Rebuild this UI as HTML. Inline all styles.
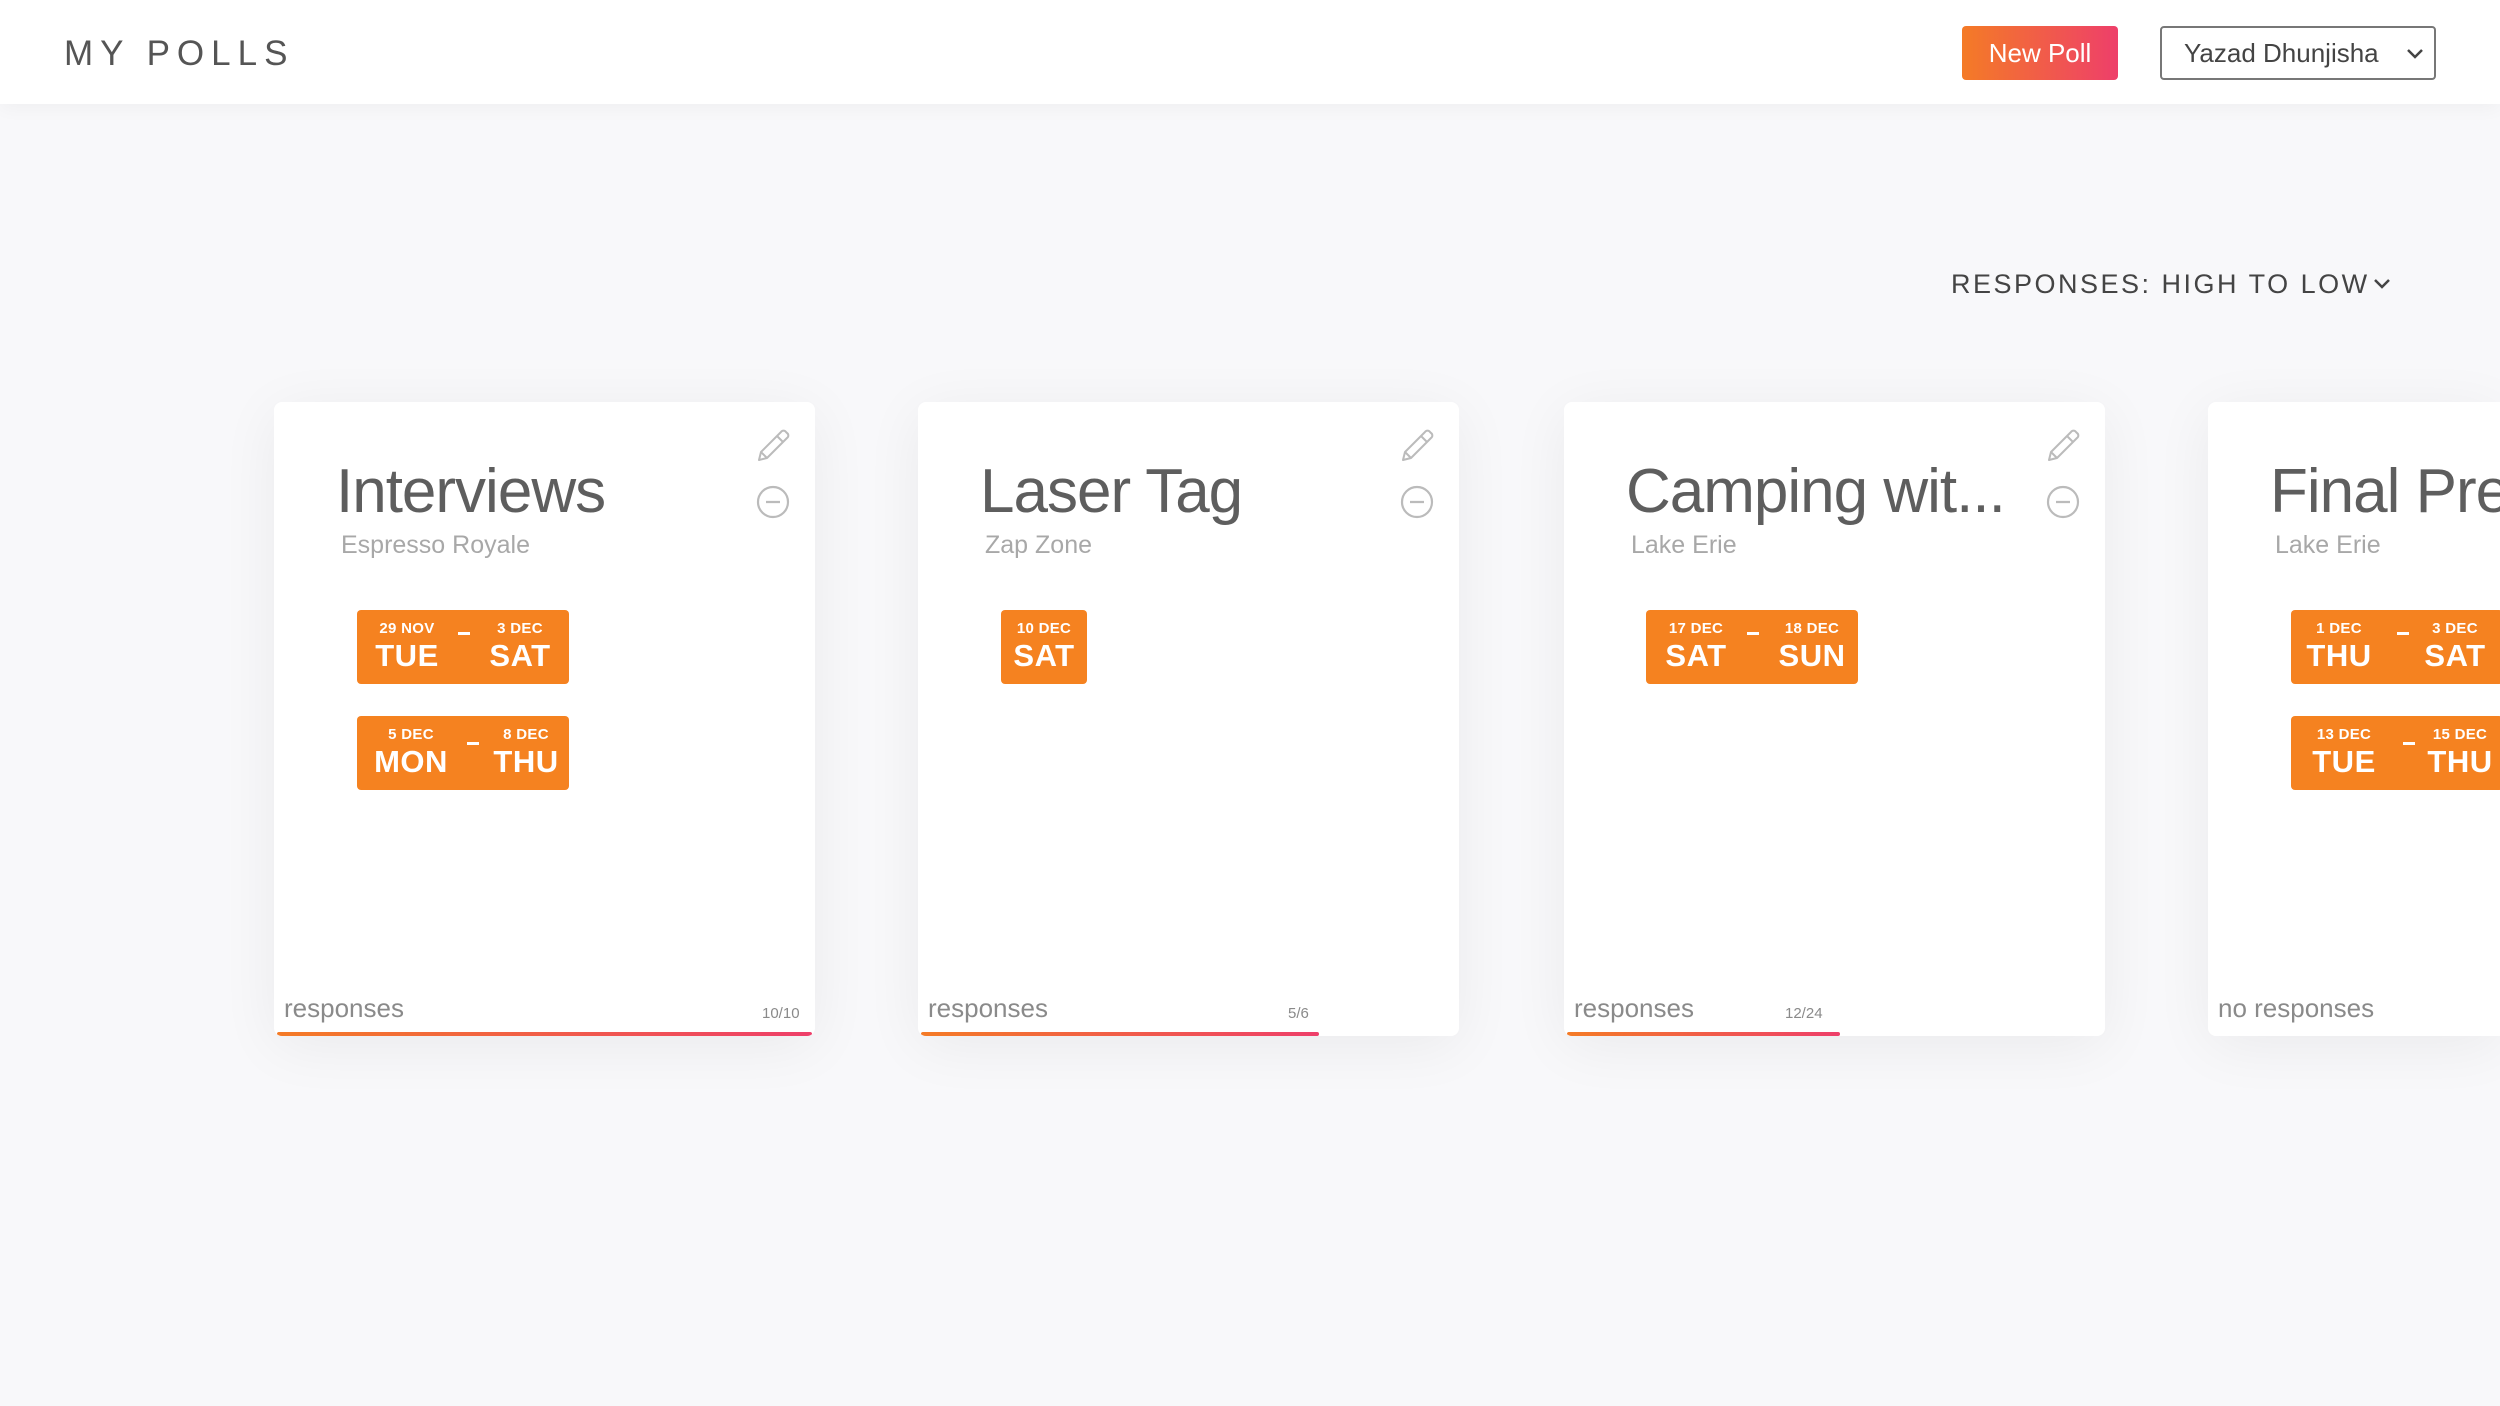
<!DOCTYPE html>
<html><head><meta charset="utf-8"><style>
*{margin:0;padding:0;box-sizing:border-box}
html,body{overflow:hidden}
body{width:2500px;height:1406px;background:#f8f8fa;font-family:"Liberation Sans",sans-serif;position:relative}
.hdr{position:absolute;left:0;top:0;width:2500px;height:104px;background:#fff;box-shadow:0 4px 18px rgba(0,0,0,0.04)}
.logo{position:absolute;left:64px;top:34px;font-size:35px;letter-spacing:7px;color:#555;line-height:40px}
.np{position:absolute;left:1962px;top:26px;width:156px;height:54px;border-radius:4px;background:linear-gradient(90deg,#f47b26,#ee3f6a);color:#fff;font-size:26px;line-height:54px;text-align:center}
.dd{position:absolute;left:2160px;top:26px;width:276px;height:54px;border:2px solid #777;border-radius:4px;color:#444;font-size:26px;line-height:50px;padding-left:22px}
.dd svg,.sort svg{position:absolute}
.sort{position:absolute;left:1951px;top:268px;font-size:27px;letter-spacing:2.5px;color:#444;line-height:32px;width:460px}
.card{position:absolute;top:402px;width:541px;height:634px;background:#fff;border-radius:8px;box-shadow:0 10px 60px rgba(0,0,0,0.06);overflow:hidden}
.t{position:absolute;left:62px;top:52px;font-size:62px;color:#5e5e5e;line-height:76px;white-space:nowrap;letter-spacing:-1px}
.s{position:absolute;left:67px;top:128px;font-size:25px;color:#a8a8a8;line-height:30px}
.pen{position:absolute;left:481px;top:26px}
.min{position:absolute;left:481px;top:82px}
.b{position:absolute;left:83px;width:212px;height:74px;background:#f58220;border-radius:4px;color:#fff}
.b .c{position:absolute;top:10px;width:100px;text-align:center}
.b .sm{font-size:15px;font-weight:bold;line-height:18px;letter-spacing:0.3px}
.b .bg{font-size:31px;font-weight:bold;line-height:36px;letter-spacing:0.5px}
.b .d{position:absolute;left:101px;top:22px;width:12px;height:3px;background:#fff}
.r{position:absolute;left:10px;top:590px;font-size:26px;color:#8a8a8a;line-height:32px}
.n{position:absolute;top:603px;font-size:15px;color:#8a8a8a;line-height:18px}
.bar{position:absolute;left:3px;bottom:0;height:4px;background:linear-gradient(90deg,#f47b26,#ee3f6a);border-radius:2px}
</style></head><body>
<div class="hdr">
<div class="logo">MY POLLS</div>
<div class="np">New Poll</div>
<div class="dd">Yazad Dhunjisha<svg style="left:244px;top:20px" width="18" height="12" viewBox="0 0 18 12"><path d="M2 2l7 7 7-7" fill="none" stroke="#444" stroke-width="2.5"/></svg></div>
</div>
<div class="sort">RESPONSES: HIGH TO LOW<svg style="left:422px;top:10px" width="18" height="12" viewBox="0 0 18 12"><path d="M2 2l7 7 7-7" fill="none" stroke="#444" stroke-width="2.5"/></svg></div>

<div class="card" style="left:274px">
<div class="t">Interviews</div><div class="s">Espresso Royale</div>
<svg class="pen" width="36" height="36" viewBox="0 0 36 36"><path d="M4 32l2-8L26 4a3 3 0 0 1 5 0l1 1a3 3 0 0 1 0 5L12 30z M22 8l6 6 M6 24l6 6" fill="none" stroke="#bbb" stroke-width="2" stroke-linejoin="round"/></svg>
<svg class="min" width="36" height="36" viewBox="0 0 36 36"><circle cx="18" cy="18" r="15" fill="none" stroke="#bbb" stroke-width="2.2"/><path d="M11 18h14" stroke="#bbb" stroke-width="2.2"/></svg>
<div class="b" style="top:208px"><div class="c" style="left:0"><div class="sm">29 NOV</div><div class="bg">TUE</div></div><div class="d"></div><div class="c" style="left:113px"><div class="sm">3 DEC</div><div class="bg">SAT</div></div></div>
<div class="b" style="top:314px"><div class="c" style="left:4px"><div class="sm">5 DEC</div><div class="bg">MON</div></div><div class="d" style="left:110px;top:26px"></div><div class="c" style="left:119px"><div class="sm">8 DEC</div><div class="bg">THU</div></div></div>
<div class="r">responses</div><div class="n" style="left:488px">10/10</div>
<div class="bar" style="width:535px"></div>
</div>

<div class="card" style="left:918px">
<div class="t">Laser Tag</div><div class="s">Zap Zone</div>
<svg class="pen" width="36" height="36" viewBox="0 0 36 36"><path d="M4 32l2-8L26 4a3 3 0 0 1 5 0l1 1a3 3 0 0 1 0 5L12 30z M22 8l6 6 M6 24l6 6" fill="none" stroke="#bbb" stroke-width="2" stroke-linejoin="round"/></svg>
<svg class="min" width="36" height="36" viewBox="0 0 36 36"><circle cx="18" cy="18" r="15" fill="none" stroke="#bbb" stroke-width="2.2"/><path d="M11 18h14" stroke="#bbb" stroke-width="2.2"/></svg>
<div class="b" style="top:208px;width:86px"><div class="c" style="left:-7px"><div class="sm">10 DEC</div><div class="bg">SAT</div></div></div>
<div class="r">responses</div><div class="n" style="left:370px">5/6</div>
<div class="bar" style="width:398px"></div>
</div>

<div class="card" style="left:1564px">
<div class="t">Camping wit...</div><div class="s">Lake Erie</div>
<svg class="pen" width="36" height="36" viewBox="0 0 36 36"><path d="M4 32l2-8L26 4a3 3 0 0 1 5 0l1 1a3 3 0 0 1 0 5L12 30z M22 8l6 6 M6 24l6 6" fill="none" stroke="#bbb" stroke-width="2" stroke-linejoin="round"/></svg>
<svg class="min" width="36" height="36" viewBox="0 0 36 36"><circle cx="18" cy="18" r="15" fill="none" stroke="#bbb" stroke-width="2.2"/><path d="M11 18h14" stroke="#bbb" stroke-width="2.2"/></svg>
<div class="b" style="top:208px;left:82px"><div class="c" style="left:0"><div class="sm">17 DEC</div><div class="bg">SAT</div></div><div class="d"></div><div class="c" style="left:116px"><div class="sm">18 DEC</div><div class="bg">SUN</div></div></div>
<div class="r">responses</div><div class="n" style="left:221px">12/24</div>
<div class="bar" style="width:273px"></div>
</div>

<div class="card" style="left:2208px;width:292px;border-radius:8px 0 0 8px">
<div class="t">Final Pre</div><div class="s">Lake Erie</div>
<div class="b" style="top:208px"><div class="c" style="left:-2px"><div class="sm">1 DEC</div><div class="bg">THU</div></div><div class="d" style="left:106px"></div><div class="c" style="left:114px"><div class="sm">3 DEC</div><div class="bg">SAT</div></div></div>
<div class="b" style="top:314px"><div class="c" style="left:3px"><div class="sm">13 DEC</div><div class="bg">TUE</div></div><div class="d" style="left:112px;top:26px"></div><div class="c" style="left:119px"><div class="sm">15 DEC</div><div class="bg">THU</div></div></div>
<div class="r">no responses</div>
</div>
</body></html>
